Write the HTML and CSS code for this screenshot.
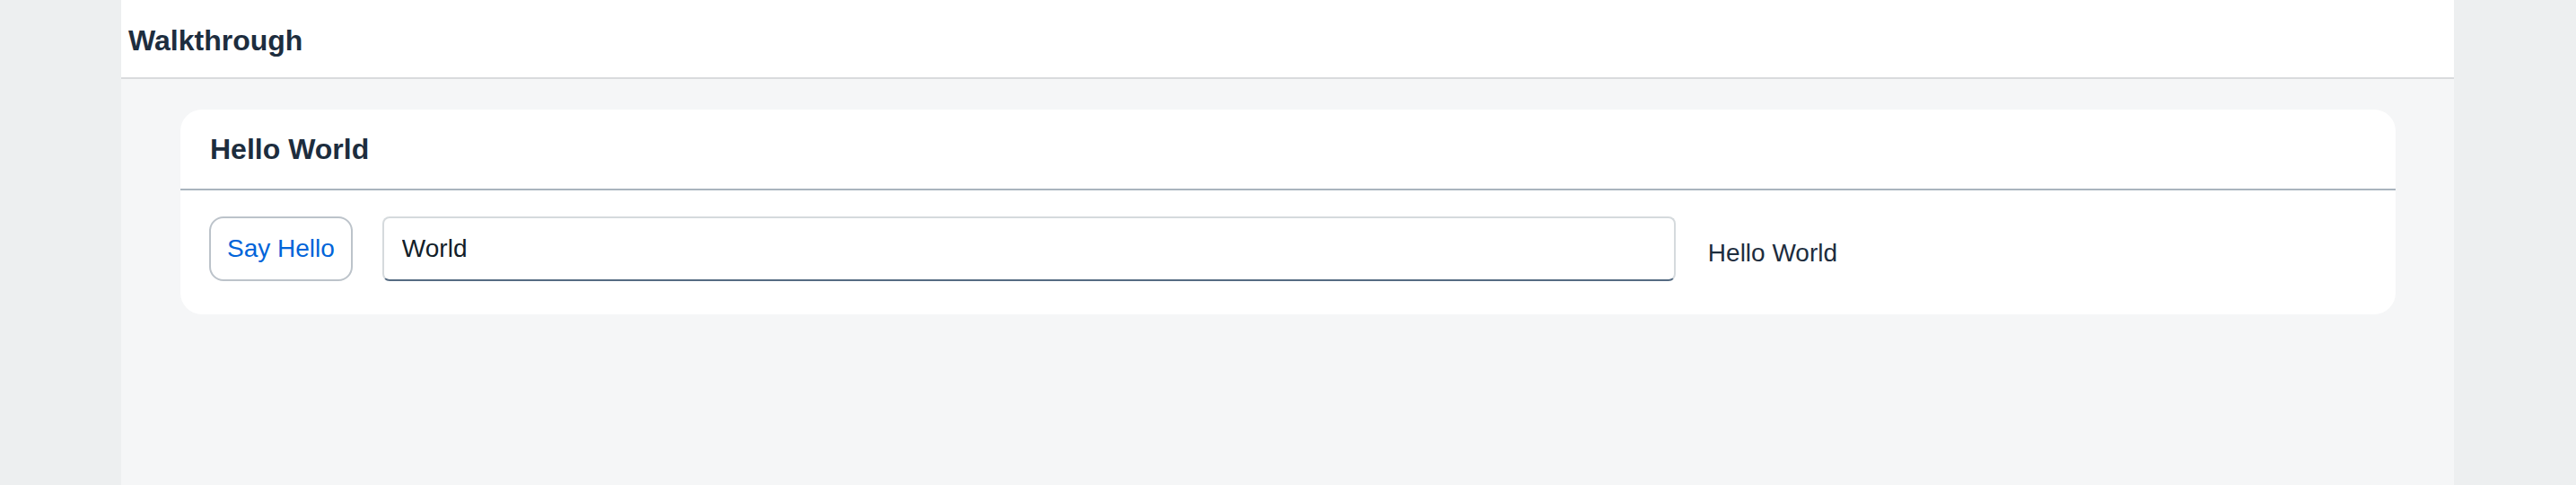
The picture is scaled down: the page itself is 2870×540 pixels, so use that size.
FILE: index.html
```html
<!DOCTYPE html>
<html lang="en">
<head>
<meta charset="utf-8">
<title>Walkthrough</title>
<link rel="stylesheet" href="styles.css">
</head>
<body>
<div class="shell">
  <div class="page">
    <header class="page-header">
      <h1 class="page-title">Walkthrough</h1>
    </header>
    <section class="panel">
      <div class="panel-header">
        <h2 class="panel-title">Hello World</h2>
      </div>
      <div class="panel-content">
        <button class="btn" type="button">Say Hello</button>
        <input class="field" type="text" value="World">
        <span class="output-text">Hello World</span>
      </div>
    </section>
  </div>
</div>
</body>
</html>
```

FILE: styles.css
```css
* {
  box-sizing: border-box;
}

html, body {
  margin: 0;
  padding: 0;
  height: 100%;
}

body {
  background: #edeff0;
  font-family: "Liberation Sans", Arial, sans-serif;
  color: #1d2d3e;
}

.shell {
  display: flex;
  height: 540px;
  padding-left: 135px;
}

.page {
  width: 2599px;
  height: 540px;
  background: #f5f6f7;
  display: flex;
  flex-direction: column;
}

.page-header {
  height: 88px;
  background: #ffffff;
  border-bottom: 2px solid #d9dbdd;
  padding: 27px 0 0 8px;
}

.page-title {
  margin: 0;
  font-size: 32px;
  line-height: 36px;
  font-weight: bold;
  color: #1d2d3e;
}

.panel {
  margin: 34px 65px 0 66px;
  background: #ffffff;
  border-radius: 24px;
}

.panel-header {
  padding: 26px 33px;
  border-bottom: 2px solid #a9b4be;
}

.panel-title {
  margin: 0;
  font-size: 32px;
  line-height: 36px;
  font-weight: bold;
  color: #1d2d3e;
}

.panel-content {
  display: flex;
  align-items: flex-start;
  padding: 29px 32px 37px 32px;
}

.btn {
  height: 72px;
  padding: 0 18px;
  margin: 0;
  background: #ffffff;
  border: 2px solid #bcc3ca;
  border-radius: 16px;
  font-family: "Liberation Sans", Arial, sans-serif;
  font-size: 28px;
  color: #0064d9;
  cursor: pointer;
}

.field {
  width: 1441px;
  height: 72px;
  margin: 0 0 0 33px;
  padding: 0 20px;
  background: #ffffff;
  border: 2px solid #d5dadd;
  border-bottom: 2px solid #556b82;
  border-radius: 8px;
  font-family: "Liberation Sans", Arial, sans-serif;
  font-size: 28px;
  color: #131e29;
  outline: none;
}

.output-text {
  margin-left: 36px;
  padding-top: 25px;
  font-size: 28px;
  line-height: 32px;
  color: #1d2d3e;
}
```
